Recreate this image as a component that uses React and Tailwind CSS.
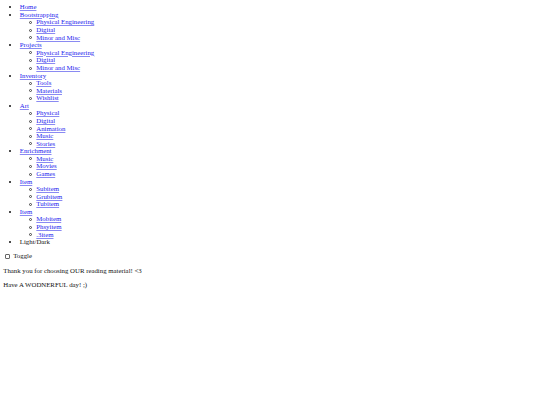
import React from 'react';

const menu = [
  { label: 'Home', items: [] },
  { label: 'Bootstrapping', items: ['Physical Engineering', 'Digital', 'Minor and Misc'] },
  { label: 'Projects', items: ['Physical Engineering', 'Digital', 'Minor and Misc'] },
  { label: 'Inventory', items: ['Tools', 'Materials', 'Wishlist'] },
  { label: 'Art', items: ['Physical', 'Digital', 'Animation', 'Music', 'Stories'] },
  { label: 'Enrichment', items: ['Music', 'Movies', 'Games'] },
  { label: 'Item', items: ['Subitem', 'Grubitem', 'Tubitem'] },
  { label: 'Item', items: ['Mobitem', 'Phsyitem', '.3item'] },
];

const linkCls = 'text-[#2323ee] underline decoration-[#8a8af2] decoration-[0.6px] underline-offset-[0.8px]';

export default function App() {
  return (
    <div
      className="min-h-[405px] bg-white text-[#111] p-[3.3px] text-[6.8px] leading-[7.58px]"
      style={{ fontFamily: '"Liberation Serif", "Times New Roman", serif' }}
    >
      <ul className="list-disc pl-[16.5px]">
        {menu.map((m, i) => (
          <li key={i}>
            <a href="#" className={linkCls}>{m.label}</a>
            {m.items.length > 0 && (
              <ul className="list-none pl-[16.5px]">
                {m.items.map((s, j) => (
                  <li key={j} className="relative">
                    {/* hollow circle marker */}
                    <span className="absolute left-[-7.8px] top-[2.6px] w-[3px] h-[3px] rounded-full border-[0.7px] border-[#444]" />
                    <a href="#" className={linkCls}>{s}</a>
                  </li>
                ))}
              </ul>
            )}
          </li>
        ))}
        <li>Light/Dark</li>
      </ul>

      <div className="mt-[6.6px] flex items-center">
        <span className="inline-block w-[5.2px] h-[5.2px] border-[0.7px] border-[#666] rounded-[1px] bg-white ml-[1.8px] mr-[1.3px]" />
        <span className="ml-[1.6px]">Toggle</span>
      </div>

      <p className="mt-[6.6px]">Thank you for choosing OUR reading material! &lt;3</p>
      <p className="mt-[6.6px]">Have A WODNERFUL day! ;)</p>
    </div>
  );
}
